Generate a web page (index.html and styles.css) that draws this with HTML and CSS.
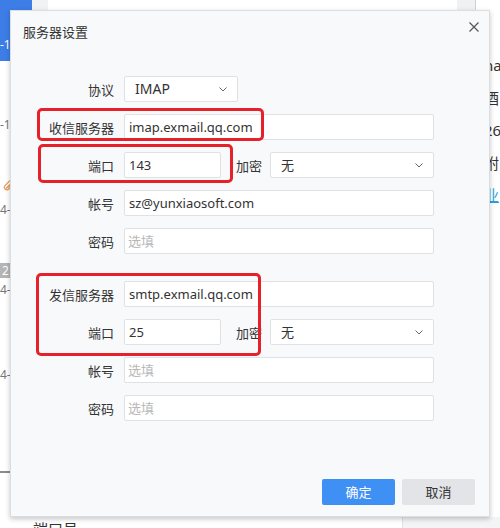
FILE: index.html
```html
<!DOCTYPE html>
<html lang="zh-CN">
<head>
<meta charset="utf-8">
<title>服务器设置</title>
<link rel="stylesheet" href="styles.css">
</head>
<body>
<div class="app">
  <div class="list">
    <div class="item-sel">-14</div>
    <div class="date d1">-10</div>
    <svg class="clip" width="12" height="12" viewBox="0 0 12 12"><path d="M3 9.5 L8.5 4 A1.5 1.5 0 0 0 6.5 2 L1.8 6.8 A2.6 2.6 0 0 0 5.4 10.4 L10 5.8" fill="none" stroke="#e8a060" stroke-width="1.3"/><path d="M4.5 9 L9.5 4" fill="none" stroke="#e8a060" stroke-width="1.1"/></svg>
    <div class="date d2">4-</div>
    <div class="badge">2</div>
    <div class="date d3">4-</div>
    <div class="date d4">4-</div>
    <div class="list-line"></div>
  </div>
  <div class="gutter"></div>
  <div class="reading"></div>
  <div class="scroll"></div>
  <div class="side">
    <div class="side-line">na</div>
    <div class="side-line">酒</div>
    <div class="side-line">26</div>
    <div class="side-line">附</div>
    <div class="side-line link">业</div>
  </div>
  <div class="bottom">
    <span class="bottom-text">端口号</span>
    <div class="bottom-gray"></div>
  </div>

  <div class="dialog">
    <div class="dlg-head">
      <div class="dlg-title">服务器设置</div>
      <svg class="close" width="10" height="10" viewBox="0 0 10 10"><path d="M0.5 0.5 L9.5 9.5 M9.5 0.5 L0.5 9.5" stroke="#555" stroke-width="1.2" fill="none"/></svg>
    </div>
    <div class="form">
      <div class="row">
        <div class="label">协议</div>
        <div class="select proto"><span>IMAP</span><svg class="chev" width="8" height="5" viewBox="0 0 8 5"><path d="M0.5 0.5 L4 4 L7.5 0.5" fill="none" stroke="#666" stroke-width="1"/></svg></div>
      </div>
      <div class="row">
        <div class="label">收信服务器</div>
        <div class="field wide">imap.exmail.qq.com</div>
      </div>
      <div class="row">
        <div class="label">端口</div>
        <div class="field port">143</div>
        <div class="label2">加密</div>
        <div class="select enc"><span>无</span><svg class="chev" width="8" height="5" viewBox="0 0 8 5"><path d="M0.5 0.5 L4 4 L7.5 0.5" fill="none" stroke="#666" stroke-width="1"/></svg></div>
      </div>
      <div class="row">
        <div class="label">帐号</div>
        <div class="field wide">sz@yunxiaosoft.com</div>
      </div>
      <div class="row">
        <div class="label">密码</div>
        <div class="field wide ph">选填</div>
      </div>
      <div class="row group">
        <div class="label">发信服务器</div>
        <div class="field wide">smtp.exmail.qq.com</div>
      </div>
      <div class="row">
        <div class="label">端口</div>
        <div class="field port">25</div>
        <div class="label2">加密</div>
        <div class="select enc"><span>无</span><svg class="chev" width="8" height="5" viewBox="0 0 8 5"><path d="M0.5 0.5 L4 4 L7.5 0.5" fill="none" stroke="#666" stroke-width="1"/></svg></div>
      </div>
      <div class="row">
        <div class="label">帐号</div>
        <div class="field wide ph">选填</div>
      </div>
      <div class="row">
        <div class="label">密码</div>
        <div class="field wide ph">选填</div>
      </div>
    </div>
    <div class="dlg-foot">
      <div class="btn primary">确定</div>
      <div class="btn">取消</div>
    </div>
  </div>

  <div class="mark mark1"></div>
  <div class="mark mark2"></div>
  <div class="mark mark3"></div>
</div>
</body>
</html>
```

FILE: styles.css
```css
* { box-sizing: border-box; }
html, body { margin: 0; padding: 0; }
body {
  font-family: "Noto Sans", "Noto Sans CJK SC", sans-serif;
  color: #333;
  background: #fff;
}
.app {
  position: relative;
  width: 500px;
  height: 528px;
  overflow: hidden;
  display: grid;
  grid-template-columns: 32px 16px 1fr 18px 1px 24px;
  grid-template-rows: 517px 11px;
  background: #fff;
}
.list { grid-column: 1; grid-row: 1; display: flex; flex-direction: column; align-items: flex-start; font-size: 12px; line-height: 14px; }
.item-sel { width: 32px; height: 61px; background: #3c7de6; color: #fff; padding-top: 38px; padding-left: 0; }
.date { color: #777; }
.d1 { margin-top: 57px; }
.clip { margin-top: 47px; margin-left: 3px; }
.d2 { margin-top: 12px; }
.badge { margin-top: 46px; width: 12px; height: 15px; background: #b5b5b5; color: #fff; font-size: 12px; line-height: 15px; padding-left: 2px; }
.d3 { margin-top: 5px; }
.d4 { margin-top: 71px; }
.list-line { margin-top: 89px; width: 32px; height: 2px; background: #8a8a8a; }
.gutter { grid-column: 2; grid-row: 1; background: #f1f2f4; }
.reading { grid-column: 3; grid-row: 1; background: #fff; }
.scroll { grid-column: 4; grid-row: 1; background: #f0f1f3; }
.scroll + .side { }
.side { grid-column: 6; grid-row: 1; padding-top: 56px; padding-left: 8px; font-size: 15px; line-height: 18px; color: #333; border-left: 1px solid #cfd1d4; margin-left: -1px; }
.side-line { height: 32.5px; white-space: nowrap; }
.side-line.link { color: #2a9fe0; text-decoration: underline; }
.bottom { grid-column: 1 / -1; grid-row: 2; display: flex; justify-content: space-between; }
.bottom-text { padding-left: 33px; font-size: 15px; line-height: 22px; margin-top: 1px; color: #333; }
.bottom-gray { width: 98px; background: #f3f4f6; border-left: 1px solid #e2e3e5; }

.dialog {
  position: absolute;
  left: 10px;
  top: 10px;
  width: 480px;
  height: 507px;
  background: #f8f9fb;
  border: 1px solid #dcdde0;
  box-shadow: 0 2px 5px rgba(0,0,0,0.22);
  display: flex;
  flex-direction: column;
}
.dlg-head { height: 40px; display: flex; justify-content: space-between; align-items: flex-start; padding: 0 10px 0 12px; }
.dlg-title { margin-top: 13px; font-size: 13px; line-height: 16px; color: #333; }
.close { margin-top: 11px; }
.form { padding-top: 25px; display: flex; flex-direction: column; }
.row { display: flex; align-items: center; height: 26px; margin-top: 12px; }
.row:first-child { margin-top: 0; }
.row.group { margin-top: 27px; }
.label { width: 103px; text-align: right; font-size: 13px; color: #333; margin-right: 10px; }
.label2 { width: 26px; font-size: 13px; color: #333; margin-left: 15px; margin-right: 8px; }
.field, .select {
  height: 26px;
  background: #fff;
  border: 1px solid #dfe1e5;
  border-radius: 2px;
  font-size: 13px;
  line-height: 24px;
  color: #333;
  white-space: nowrap;
}
.field { padding: 0 4px; }
.field.wide { width: 310px; }
.field.port { width: 97px; }
.field.ph { color: #b8b8b8; padding-left: 3px; }
.select { display: flex; align-items: center; justify-content: space-between; padding: 0 10px 0 10px; }
.select.proto { width: 114px; }
.select.proto span { font-size: 14px; }
.select.enc { width: 164px; }
.chev { flex: none; }
.dlg-foot { margin-top: auto; display: flex; justify-content: flex-end; gap: 7px; padding: 0 14px 11px 0; }
.btn { width: 73px; height: 26px; border-radius: 2px; background: #e2e4e8; color: #333; font-size: 13px; line-height: 26px; text-align: center; }
.btn.primary { background: #3f90f4; color: #fff; }

.mark { position: absolute; border: 3px solid #e62129; border-radius: 5px; }
.mark1 { left: 37px; top: 108px; width: 227px; height: 33px; }
.mark2 { left: 38px; top: 144px; width: 195px; height: 39px; }
.mark3 { left: 36px; top: 273px; width: 225px; height: 83px; }
```
